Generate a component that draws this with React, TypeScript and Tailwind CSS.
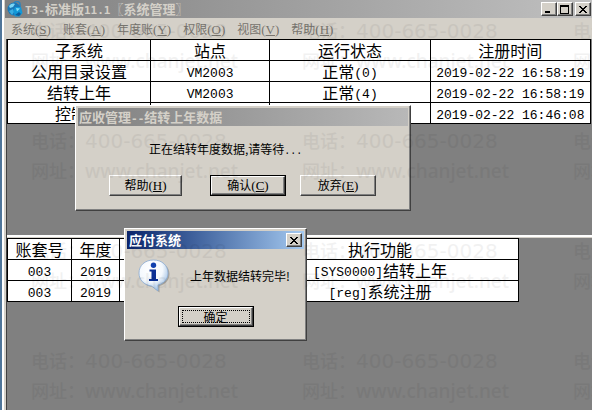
import React, {ReactNode} from 'react';

type MenuEntry = {label: string; hotkey: string};

const menu: MenuEntry[] = [
  {label: '系统', hotkey: 'S'},
  {label: '账套', hotkey: 'A'},
  {label: '年度账', hotkey: 'Y'},
  {label: '权限', hotkey: 'O'},
  {label: '视图', hotkey: 'V'},
  {label: '帮助', hotkey: 'H'},
];

const sessions = [
  {name: '公用目录设置', host: 'VM2003', code: '(0)', time: '2019-02-22 16:58:19'},
  {name: '结转上年', host: 'VM2003', code: '(4)', time: '2019-02-22 16:58:19'},
  {name: '控制台', host: 'VM2003', code: '(0)', time: '2019-02-22 16:46:08'},
];

const tasks = [
  {account: '003', year: '2019', code: '[SYS0000]', title: '结转上年'},
  {account: '003', year: '2019', code: '[reg]', title: '系统注册'},
];

const cell =
  'h-[21px] border border-black p-0 text-center font-normal whitespace-nowrap';
const bevel =
  'border border-t-white border-l-white border-r-[#404040] border-b-[#404040] bg-[#d4d0c8] shadow-[inset_-1px_-1px_0_#808080]';

function Mono({children}: {children: ReactNode}) {
  return (
    <span className="align-[1px] font-['Liberation_Mono',monospace] text-[13px] leading-none">
      {children}
    </span>
  );
}

function TitleLatin({children}: {children: ReactNode}) {
  return (
    <span className="font-['DejaVu_Sans_Mono',monospace] text-[11px] leading-none">
      {children}
    </span>
  );
}

function Hotkey({letter}: {letter: string}) {
  return (
    <span className="font-['Liberation_Serif',serif] text-[13px] leading-none">
      (<span className="underline underline-offset-1">{letter}</span>)
    </span>
  );
}

function CaptionButton({label, children}: {label: string; children: ReactNode}) {
  return (
    <button
      type="button"
      aria-label={label}
      className={`flex h-3.5 w-4 items-center justify-center ${bevel}`}>
      <svg
        viewBox="0 0 10 9"
        className="h-[9px] w-2.5"
        fill="none"
        stroke="black"
        shapeRendering="crispEdges">
        {children}
      </svg>
    </button>
  );
}

function CloseGlyph() {
  return (
    <path
      d="M1 1h2v1h1v1h2v-1h1v-1h2v1h-1v1h-1v1h-1v1h1v1h1v1h1v1h-2v-1h-1v-1h-2v1h-1v1h-2v-1h1v-1h1v-1h1v-1h-1v-1h-1v-1h-1z"
      fill="black"
      stroke="none"
    />
  );
}

function DialogButton({
  primary,
  focused,
  className = '',
  children,
}: {
  primary?: boolean;
  focused?: boolean;
  className?: string;
  children: ReactNode;
}) {
  return (
    <span className={`flex ${primary ? 'border border-black' : ''} ${className}`}>
      <button
        type="button"
        className={`flex w-full p-0.5 text-xs leading-none ${
          primary ? 'h-[19px]' : 'h-[21px]'
        } ${bevel}`}>
        <span
          className={`flex h-full w-full items-center justify-center ${
            focused ? 'border border-dotted border-black' : ''
          }`}>
          <span>{children}</span>
        </span>
      </button>
    </span>
  );
}

function AppIcon() {
  return (
    <svg viewBox="0 0 16 16" className="h-4 w-4 shrink-0">
      <path d="M7 5V3.5a3 3 0 0 1 6 0V7" fill="none" stroke="#2c83bd" strokeWidth="1.6" />
      <circle cx="7" cy="8" r="6.5" fill="#1877b8" />
      <path d="M2 5c2-3 5-3 6-2L6 6 3 7z" fill="#79d5f4" />
      <path d="M2 10l4-2 1 3-2 3z" fill="#39aee2" />
      <path d="M8 6h6l1.500 6-3 3.500H8L6.500 10z" fill="#1298d8" />
      <path d="M9 7l4 .5-3 3z" fill="#7fe0fb" />
      <path d="M8 14l4-3 2 2-2 2z" fill="#0c5c9c" />
    </svg>
  );
}

function InfoIcon() {
  return (
    <svg viewBox="0 0 32 34" className="h-[34px] w-8 shrink-0">
      <defs>
        <radialGradient id="bubble" cx="40%" cy="30%" r="75%">
          <stop offset="0" stopColor="#ffffff" />
          <stop offset="0.55" stopColor="#f3f8fd" />
          <stop offset="1" stopColor="#8fb5df" />
        </radialGradient>
      </defs>
      <path
        d="M17 3C26 3 31.500 8 31.500 15c0 6-4 10-10 12v6.500L14.500 28C7 27 3 22 3 16 3 8 9 3 17 3z"
        fill="#77756f"
        opacity="0.5"
      />
      <path
        d="M15.500 1C24 1 30 6.500 30 14c0 6-4 10.500-10 12v6L13.500 27C6 26 1 21 1 14 1 6.500 7 1 15.500 1z"
        fill="url(#bubble)"
        stroke="#8aabd3"
        strokeWidth="0.8"
      />
      <circle cx="15.500" cy="6.200" r="2.700" fill="#0f3fae" />
      <path d="M11.500 10.500H18V20h2v2h-9v-2h2.500v-7.500h-2z" fill="#0b2f94" />
    </svg>
  );
}

function Watermark() {
  return (
    <div
      aria-hidden="true"
      className="pointer-events-none absolute inset-0 z-30 grid auto-rows-[110px] grid-cols-[repeat(3,271px)] content-start overflow-hidden pt-[15px] pl-[31px] text-lg leading-[30px] font-medium text-black opacity-[0.05]">
      {Array.from({length: 12}, (_, i) => (
        <div key={i} className="whitespace-nowrap">
          <p>
            电话：
            <span className="font-['DejaVu_Sans',sans-serif] text-xl leading-none">
              400-665-0028
            </span>
          </p>
          <p>
            网址：
            <span className="font-['Noto_Sans',sans-serif] text-[19px] leading-none">
              www.chanjet.net
            </span>
          </p>
        </div>
      ))}
    </div>
  );
}

function ProgressDialog() {
  return (
    <section
      role="dialog"
      aria-labelledby="progress-title"
      className={`absolute top-[105px] left-[75px] z-10 w-[336px] p-0.5 pb-3.5 ${bevel}`}>
      <h2
        id="progress-title"
        className="h-[18px] bg-linear-to-r from-[#808080] to-[#b8b8b8] px-px text-[13px] leading-[18px] font-bold text-[#d4d0c8]">
        应收管理
        <TitleLatin>--</TitleLatin>
        结转上年数据
      </h2>
      <p className="mt-[13px] ml-[71px] text-xs leading-5">
        正在结转年度数据,请等待
        <span className="font-['Liberation_Mono',monospace] text-[10px] leading-none">
          ...
        </span>
      </p>
      <div className="mt-4 ml-[31px] flex">
        <DialogButton className="w-[73px]">
          帮助
          <Hotkey letter="H" />
        </DialogButton>
        <DialogButton primary className="ml-7 w-[76px]">
          确认
          <Hotkey letter="C" />
        </DialogButton>
        <DialogButton className="ml-3.5 w-[76px]">
          放弃
          <Hotkey letter="E" />
        </DialogButton>
      </div>
    </section>
  );
}

function MessageBox() {
  return (
    <section
      role="alertdialog"
      aria-labelledby="message-title"
      className={`absolute top-[228px] left-[124px] z-20 w-[183px] p-0.5 pb-[13px] ${bevel}`}>
      <header className="flex h-[18px] items-center justify-between bg-linear-to-r from-[#0a246a] to-[#a6caf0] px-0.5">
        <h2 id="message-title" className="text-[13px] leading-[18px] font-bold text-white">
          应付系统
        </h2>
        <CaptionButton label="关闭">
          <CloseGlyph />
        </CaptionButton>
      </header>
      <div className="mt-2.5 ml-[11px] flex items-center gap-5">
        <InfoIcon />
        <p className="text-xs leading-5 whitespace-nowrap">上年数据结转完毕!</p>
      </div>
      <div className="mt-[13px] flex justify-center">
        <DialogButton primary focused className="w-[76px]">
          确定
        </DialogButton>
      </div>
    </section>
  );
}

export default function App() {
  return (
    <div className="relative flex min-h-screen overflow-hidden bg-[#4f7599] pl-0.5 font-['Noto_Sans_CJK_SC',sans-serif] text-black">
      <main className="flex min-w-0 flex-1 flex-col border-l-2 border-white bg-[#d4d0c8] pl-px">
        <header className="flex h-[18px] items-center bg-linear-to-r from-[#808080] to-[#c0c0c0] pl-0.5 pr-px text-[#d4d0c8]">
          <AppIcon />
          <h1 className="ml-0.5 flex-1 text-[13px] leading-[18px] font-bold whitespace-nowrap">
            <TitleLatin>T3-</TitleLatin>
            标准版
            <TitleLatin>11.1</TitleLatin>
            〖系统管理〗
          </h1>
          <div className="flex">
            <CaptionButton label="最小化">
              <path d="M1 7h5" strokeWidth="2" />
            </CaptionButton>
            <CaptionButton label="最大化">
              <path d="M0.500 0.500h8v8h-8zM0.500 1.500h8" />
            </CaptionButton>
            <span className="w-0.5" />
            <CaptionButton label="关闭">
              <CloseGlyph />
            </CaptionButton>
          </div>
        </header>

        <nav className="flex h-[21px] items-center gap-3 pl-1.5 text-xs text-[#77746e]">
          {menu.map(({label, hotkey}) => (
            <button key={hotkey} type="button" className="leading-5 whitespace-nowrap">
              {label}
              <Hotkey letter={hotkey} />
            </button>
          ))}
        </nav>

        <div className="ml-px flex flex-1 flex-col border-l border-[#404040]">
          <div className="grow-[8] basis-0 bg-[#808080] pr-px">
            <table className="w-full table-fixed border-collapse bg-white text-base leading-5">
              <colgroup>
                <col className="w-[24.500%]" />
                <col className="w-[20.500%]" />
                <col className="w-[27.500%]" />
                <col className="w-[27.500%]" />
              </colgroup>
              <thead>
                <tr>
                  <th className={cell}>子系统</th>
                  <th className={cell}>站点</th>
                  <th className={cell}>运行状态</th>
                  <th className={cell}>注册时间</th>
                </tr>
              </thead>
              <tbody>
                {sessions.map(row => (
                  <tr key={row.name}>
                    <td className={cell}>{row.name}</td>
                    <td className={cell}>
                      <Mono>{row.host}</Mono>
                    </td>
                    <td className={cell}>
                      正常<Mono>{row.code}</Mono>
                    </td>
                    <td className={cell}>
                      <Mono>{row.time}</Mono>
                    </td>
                  </tr>
                ))}
              </tbody>
            </table>
          </div>

          <div className="h-0.5 bg-white" />

          <div className="grow-[7] basis-0 border-t border-[#d4d0c8] bg-[#808080]">
            <table className="w-[512px] table-fixed border-collapse bg-white text-base leading-5">
              <colgroup>
                <col className="w-16" />
                <col className="w-12" />
                <col className="w-[122px]" />
                <col />
              </colgroup>
              <thead>
                <tr>
                  <th className={cell}>账套号</th>
                  <th className={cell}>年度</th>
                  <th className={cell}></th>
                  <th className={cell}>执行功能</th>
                </tr>
              </thead>
              <tbody>
                {tasks.map(row => (
                  <tr key={row.code}>
                    <td className={cell}>
                      <Mono>{row.account}</Mono>
                    </td>
                    <td className={cell}>
                      <Mono>{row.year}</Mono>
                    </td>
                    <td className={cell}></td>
                    <td className={cell}>
                      <Mono>{row.code}</Mono>
                      {row.title}
                    </td>
                  </tr>
                ))}
              </tbody>
            </table>
          </div>
        </div>
      </main>

      <ProgressDialog />
      <MessageBox />
      <Watermark />
    </div>
  );
}
